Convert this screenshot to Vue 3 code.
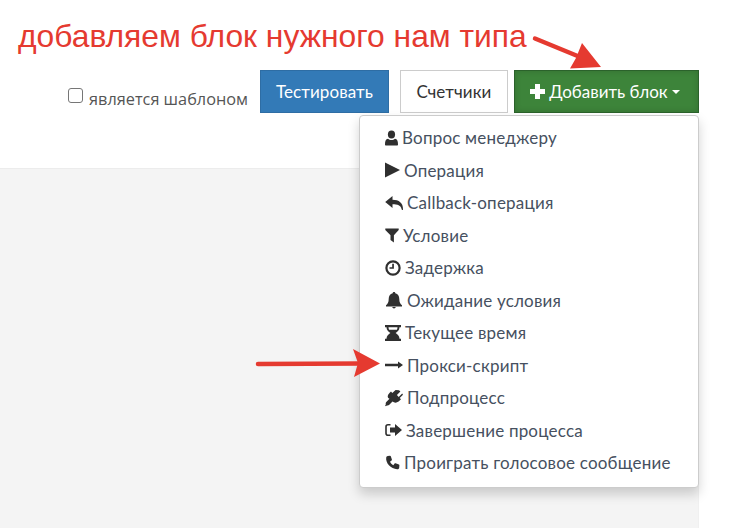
<script setup>
const items = [
  { t: 'Вопрос менеджеру', i: 'user', w: 13 },
  { t: 'Операция', i: 'play', w: 15 },
  { t: 'Callback-операция', i: 'reply', w: 18 },
  { t: 'Условие', i: 'filter', w: 14 },
  { t: 'Задержка', i: 'clock', w: 16 },
  { t: 'Ожидание условия', i: 'bell', w: 18 },
  { t: 'Текущее время', i: 'glass', w: 16 },
  { t: 'Прокси-скрипт', i: 'arrow', w: 18 },
  { t: 'Подпроцесс', i: 'plug', w: 18 },
  { t: 'Завершение процесса', i: 'exit', w: 17 },
  { t: 'Проиграть голосовое сообщение', i: 'phone', w: 15 }
]
</script>

<template>
  <div class="page">
    <header class="top">
      <h1 class="note">добавляем блок нужного нам типа</h1>
      <div class="bar">
        <label class="tpl"><input type="checkbox" class="chk" /><span>является шаблоном</span></label>
        <button class="btn blue">Тестировать</button>
        <button class="btn plain">Счетчики</button>
        <div class="drop">
          <button class="btn green">
            <svg class="plus" viewBox="0 0 15 15" width="15" height="15"><path d="M5 0h5v5h5v5h-5v5H5v-5H0V5h5z" fill="#fff" /></svg>
            Добавить блок
            <span class="caret"></span>
          </button>
          <ul class="menu">
            <li v-for="it in items" :key="it.t" class="row">
              <svg class="ic" :style="{ width: it.w + 'px' }" :viewBox="`0 0 ${it.w} 16`" height="16" fill="#2f2f2f">
                <template v-if="it.i === 'user'">
                  <ellipse cx="6.500" cy="4.500" rx="3.600" ry="4" />
                  <path d="M1 15.500c-.6 0-1-.5-1-1.100 0-3.200.7-5.400 3-5.600 1 .8 2 1.200 3.500 1.200s2.500-.4 3.500-1.200c2.300.2 3 2.400 3 5.600 0 .6-.4 1.100-1 1.100z" />
                </template>
                <path v-else-if="it.i === 'play'" d="M0 .5 15 8 0 15.500z" />
                <path v-else-if="it.i === 'reply'" d="M7.500 1 .2 7l7.300 6V9.300c5 0 8.400 1 9.200 5.200.6.800 1.200.8 1.300-.3C18.200 8 14 4.800 7.500 4.800z" />
                <path v-else-if="it.i === 'filter'" d="M.3 1.500h13.400v1.500L8.900 8.300v7.200l-3.400-2.500V8.300L.3 3z" />
                <template v-else-if="it.i === 'clock'">
                  <circle cx="8" cy="8" r="6.600" fill="none" stroke="#2f2f2f" stroke-width="2.200" />
                  <path d="M7.200 3.800h1.700v5H4.500V7.200h2.700z" />
                </template>
                <path v-else-if="it.i === 'bell'" d="M9 0c.8 0 1.300.5 1.300 1.300 2.700.7 4 3 4 5.700 0 3.200 1 5 2.700 6.200v1.200H1v-1.200c1.700-1.200 2.700-3 2.700-6.200 0-2.700 1.300-5 4-5.700C7.700.5 8.200 0 9 0zM7.200 15.100h3.600c-.2.800-.9 1.300-1.800 1.300s-1.600-.5-1.800-1.300z" />
                <path v-else-if="it.i === 'glass'" d="M0 0h16v2.300h-1.500c0 3-2.100 4.500-3.900 5.700 1.800 1.200 3.900 2.700 3.900 5.700H16V16H0v-2.300h1.500c0-3 2.100-4.500 3.900-5.700C3.600 6.800 1.500 5.300 1.500 2.300H0zM3.500 2.300c0 .9.200 1.800.6 2.500h7.800c.4-.7.600-1.600.6-2.500z" fill-rule="evenodd" />
                <path v-else-if="it.i === 'arrow'" d="M0 6.800h13V4.600L18 8l-5 3.400V9.200H0z" />
                <path v-else-if="it.i === 'plug'" d="M14 .2 15.400 1.600l-3.500 3.500 1.800 1.800 3.500-3.500L18 4.800l-3.300 3.100 1.300 1.300-1.300 1.300c-2.500 2.500-5 2.700-7.200 1.100l-3.200 3.200c-.6.600-1.700.9-2.500.6l-.9.900-.9-1 .9-.9c-.4-.7-.2-1.900.4-2.500l3.200-3.200C2 7.800 2.300 5.200 4.700 2.800l1.300-1.200 1.300 1.300L10.600-.1z" />
                <template v-else-if="it.i === 'exit'">
                  <path d="M5.500 2.800H3C1.900 2.800 1 3.700 1 4.800v6.400c0 1.100.9 2 2 2h2.500" fill="none" stroke="#2f2f2f" stroke-width="1.600" />
                  <path d="M5 5.500h5V2l7 6-7 6v-3.500H5z" />
                </template>
                <path v-else d="M2.700.9 5 .7c.4 0 .7.200.8.500l1.100 3.300c.1.400 0 .7-.3 1L5 6.800c.7 1.500 1.800 2.600 3.300 3.400l1.300-1.600c.3-.3.600-.4 1-.3l3.300 1.100c.3.100.5.500.5.900l-.2 2.500c0 .6-.5 1.200-1.200 1.400C6.500 14.800 0 8.200 1.300 2.100c.1-.6.700-1.100 1.400-1.200z" />
              </svg>
              <span>{{ it.t }}</span>
            </li>
          </ul>
        </div>
      </div>
    </header>
    <div class="content">
      <main class="canvas"></main>
    </div>

    <svg class="arrows" viewBox="0 0 739 528" width="739" height="528">
      <path d="M535 38.500 580 57" stroke="#e53a30" stroke-width="4.500" stroke-linecap="round" fill="none" />
      <path d="M582 43 601 67 570 68.500 576 58z" fill="#e53a30" />
      <path d="M258 364 362 363.500" stroke="#e53a30" stroke-width="4.500" stroke-linecap="round" fill="none" />
      <path d="M353 349 380 363.500 354 377 358 363z" fill="#e53a30" />
    </svg>
  </div>
</template>

<style scoped>
.page {
  position: relative;
  width: 739px;
  height: 528px;
  overflow: hidden;
  display: flex;
  flex-direction: column;
  background: #fff;
  font-family: "Lato", "Open Sans", sans-serif;
  color: #444;
}
.top {
  height: 168px;
  flex: none;
  border-bottom: 1px solid #ececec;
  width: 699px;
}
.note {
  margin: 0;
  padding: 17px 0 0 18px;
  height: 70px;
  box-sizing: border-box;
  font: 400 31.800px/38px "Liberation Sans", Arial, sans-serif;
  color: #e53a30;
  white-space: nowrap;
}
.bar {
  display: flex;
  justify-content: flex-end;
  align-items: flex-start;
}
.tpl {
  display: flex;
  align-items: center;
  margin-right: 12px;
  padding-top: 18px;
  font: 400 16.300px/22px "Open Sans", sans-serif;
  color: #555;
}
.chk {
  appearance: none;
  flex: none;
  width: 15px;
  height: 15px;
  margin: -7px 6px 0 0;
  border: 1.500px solid #767676;
  border-radius: 3px;
  background: #fff;
}
.btn {
  height: 43px;
  box-sizing: border-box;
  border: 1px solid transparent;
  border-radius: 0;
  font: inherit;
  font-size: 17px;
  letter-spacing: 0.1px;
  padding: 0;
}
.blue { width: 129px; background: #337ab7; border-color: #2e6da4; color: #fff; margin-right: 11px; }
.plain { width: 108px; background: #fff; border: 1px solid #ccc; color: #333; margin-right: 6px; }
.drop { position: relative; }
.green {
  width: 185px;
  padding-right: 3px;
  background: #3d843a;
  border-color: #2b622b;
  box-shadow: inset 0 0 6px rgba(0, 0, 0, 0.15);
  color: #fff;
  display: flex;
  align-items: center;
  justify-content: center;
  gap: 4px;
  letter-spacing: 0;
}
.plus { flex: none; }
.caret {
  width: 0;
  height: 0;
  border-left: 4.500px solid transparent;
  border-right: 4.500px solid transparent;
  border-top: 4.500px solid #fff;
}
.menu {
  position: absolute;
  top: 45px;
  right: 0;
  width: 340px;
  height: 373px;
  box-sizing: border-box;
  margin: 0;
  padding: 5.500px 0 0;
  list-style: none;
  background: #fff;
  border: 1px solid #ccc;
  border-radius: 4px;
  box-shadow: 0 6px 12px rgba(0, 0, 0, 0.175);
  z-index: 2;
}
.row {
  height: 32.500px;
  display: flex;
  align-items: center;
  gap: 4px;
  padding-left: 25px;
  font-size: 17px;
  letter-spacing: 0.2px;
  font-weight: 400;
  color: #465060;
  white-space: nowrap;
}
.ic { flex: none; overflow: visible; }
.content {
  flex: 1;
  display: flex;
}
.canvas {
  width: 698px;
  background: #f4f4f4;
  border-right: 1px solid #f0f0f0;
}
.arrows {
  position: absolute;
  inset: 0;
  z-index: 3;
  pointer-events: none;
}
</style>
